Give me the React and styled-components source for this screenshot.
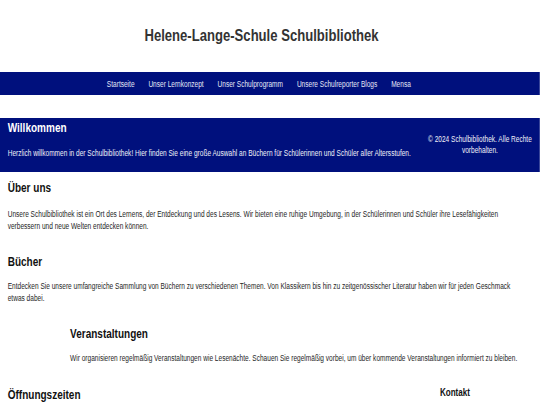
import React from "react";
import styled, { createGlobalStyle } from "styled-components";

const GlobalStyle = createGlobalStyle`
  html, body { margin: 0; padding: 0; background: #ffffff; overflow-x: hidden; }
  body {
    font-family: "Liberation Sans", Arial, Helvetica, sans-serif;
    color: #222;
  }
`;

const NAVY = "#00107d";
const SQUEEZE = 0.77;

/* The page is laid out at its natural width and narrowed horizontally,
   like the condensed rendering of the reference. */
const Page = styled.div`
  width: ${540 / SQUEEZE}px;
  transform: scaleX(${SQUEEZE});
  transform-origin: left top;
`;

const Header = styled.header`
  height: 72px;
  display: flex;
  align-items: center;
  justify-content: center;
  padding-right: 22px;
`;

const Title = styled.h1`
  margin: 0;
  font-size: 17px;
  line-height: 20px;
  font-weight: 700;
  color: #333;
`;

const Nav = styled.nav`
  height: 23px;
  background: ${NAVY};
  display: flex;
  align-items: center;
  justify-content: center;
  gap: 18px;
  padding-right: 29px;
`;

const NavLink = styled.a`
  font-size: 8.5px;
  line-height: 10px;
  color: #e4e7f6;
  text-decoration: none;
`;

const Main = styled.main`
  margin-top: 23px;
`;

const Welcome = styled.div`
  height: 54px;
  background: ${NAVY};
  display: flex;
  color: #fff;
`;

const WelcomeText = styled.section`
  flex: 1;
  padding: 0 10px;
`;

const WelcomeTitle = styled.h2`
  margin: 2px 0 0;
  font-size: 13px;
  line-height: 15px;
  font-weight: 700;
  color: #fff;
`;

const WelcomePara = styled.p`
  margin: 13px 0 0;
  font-size: 8.5px;
  line-height: 11px;
  color: #f0f0f8;
`;

const Footer = styled.footer`
  width: 156px;
  align-self: center;
  text-align: center;
  font-size: 8.5px;
  line-height: 11px;
  color: #f0f0f8;
`;

const Section = styled.section`
  flex: ${(p) => (p.$grow ? 1 : "none")};
  padding: 0 ${(p) => (p.$indent ? 10 : 30)}px 0 ${(p) => (p.$indent ? 91 : 10)}px;
  margin-top: ${(p) => p.$top}px;
`;

const Heading = styled.h2`
  margin: 0;
  font-size: 13px;
  line-height: 15px;
  font-weight: 700;
  color: #111;
`;

const Para = styled.p`
  margin: ${(p) => p.$gap}px 0 0;
  font-size: 8.5px;
  line-height: 12px;
  color: #1e1e1e;
`;

const BottomRow = styled.div`
  display: flex;
  align-items: flex-start;
`;

const Aside = styled.aside`
  width: 130px;
  padding-top: 22px;
`;

const AsideHeading = styled.h3`
  margin: 0;
  font-size: 10.5px;
  line-height: 12px;
  font-weight: 700;
  color: #111;
`;

const navItems = [
  "Startseite",
  "Unser Lernkonzept",
  "Unser Schulprogramm",
  "Unsere Schulreporter Blogs",
  "Mensa",
];

export default function App() {
  return (
    <>
      <GlobalStyle />
      <Page>
        <Header>
          <Title>Helene-Lange-Schule Schulbibliothek</Title>
        </Header>
        <Nav>
          {navItems.map((n) => (
            <NavLink key={n} href="#">
              {n}
            </NavLink>
          ))}
        </Nav>
        <Main>
          <Welcome>
            <WelcomeText>
              <WelcomeTitle>Willkommen</WelcomeTitle>
              <WelcomePara>
                Herzlich willkommen in der Schulbibliothek! Hier finden Sie eine große Auswahl an Büchern für
                Schülerinnen und Schüler aller Altersstufen.
              </WelcomePara>
            </WelcomeText>
            <Footer>© 2024 Schulbibliothek. Alle Rechte vorbehalten.</Footer>
          </Welcome>
          <Section $top={8}>
            <Heading>Über uns</Heading>
            <Para $gap={13}>
              Unsere Schulbibliothek ist ein Ort des Lernens, der Entdeckung und des Lesens. Wir bieten eine ruhige
              Umgebung, in der Schülerinnen und Schüler ihre Lesefähigkeiten verbessern und neue Welten entdecken
              können.
            </Para>
          </Section>
          <Section $top={22}>
            <Heading>Bücher</Heading>
            <Para $gap={11}>
              Entdecken Sie unsere umfangreiche Sammlung von Büchern zu verschiedenen Themen. Von Klassikern bis
              hin zu zeitgenössischer Literatur haben wir für jeden Geschmack etwas dabei.
            </Para>
          </Section>
          <Section $top={22} $indent>
            <Heading>Veranstaltungen</Heading>
            <Para $gap={11}>
              Wir organisieren regelmäßig Veranstaltungen wie Lesenächte. Schauen Sie regelmäßig vorbei, um über
              kommende Veranstaltungen informiert zu bleiben.
            </Para>
          </Section>
          <BottomRow>
            <Section $top={23} $grow>
              <Heading>Öffnungszeiten</Heading>
            </Section>
            <Aside>
              <AsideHeading>Kontakt</AsideHeading>
            </Aside>
          </BottomRow>
        </Main>
      </Page>
    </>
  );
}
